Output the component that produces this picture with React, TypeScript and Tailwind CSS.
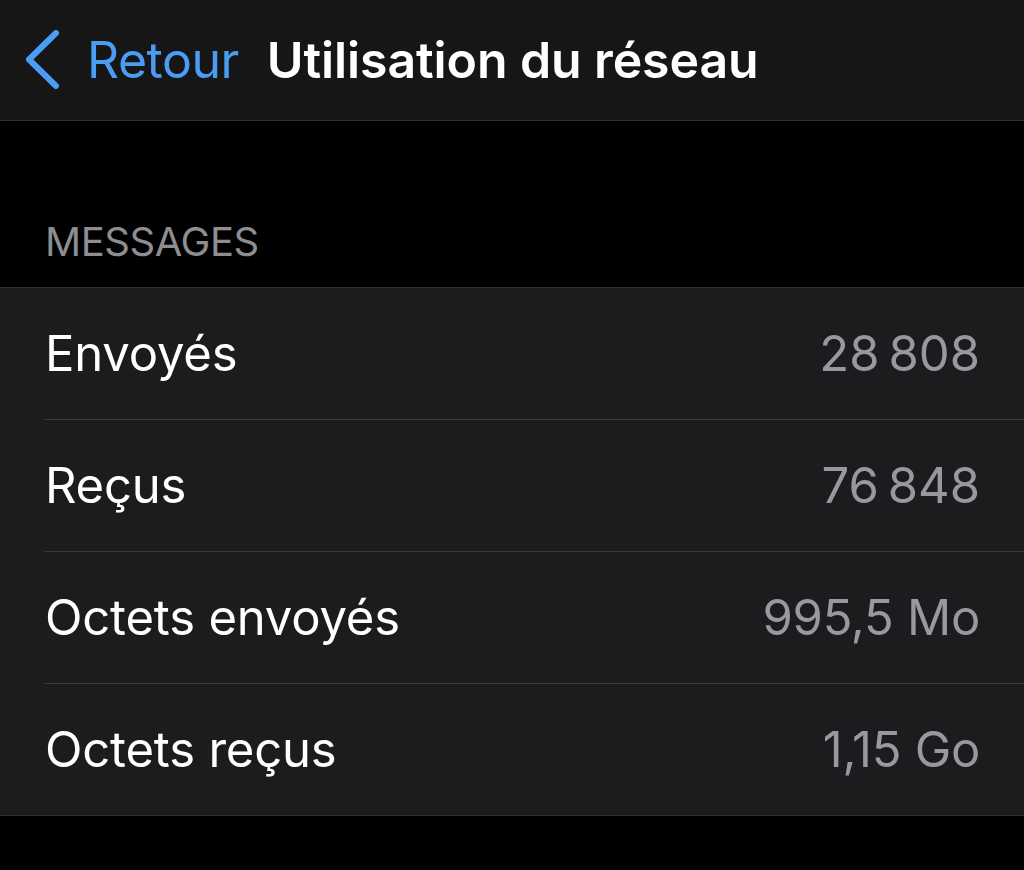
import React from "react";

const rows = [
  { label: "Envoyés", value: "28\u202f808" },
  { label: "Reçus", value: "76\u202f848" },
  { label: "Octets envoyés", value: "995,5 Mo" },
  { label: "Octets reçus", value: "1,15 Go" },
];

export default function App() {
  return (
    <div
      className="w-[1024px] h-[870px] bg-black overflow-hidden"
      style={{ fontFamily: "Inter, 'Noto Sans', sans-serif" }}
    >
      <div className="h-[121px] bg-[#161616] border-b border-[#2e2e2e] flex items-center">
        <div className="flex items-center pl-[25px]">
          <svg width="36" height="60" viewBox="0 0 36 60" className="shrink-0">
            <path
              d="M31 3 L4 29.5 L31 56"
              fill="none"
              stroke="#4a9cf5"
              strokeWidth="6"
              strokeLinecap="round"
              strokeLinejoin="round"
            />
          </svg>
          <span className="ml-[26px] text-[50px] leading-none text-[#4a9cf5] tracking-[-0.5px]">
            Retour
          </span>
          <span className="ml-[28px] text-[50px] leading-none font-semibold text-white tracking-[-0.1px]">
            Utilisation du réseau
          </span>
        </div>
      </div>
      <div className="h-[166px] flex items-end pl-[45px] pb-[25px]">
        <span className="text-[40px] leading-none text-[#8d8d92] tracking-[-0.45px]">
          MESSAGES
        </span>
      </div>
      <div className="bg-[#1c1c1e] border-t border-b border-[#2f2f31]">
        {rows.map((r, i) => (
          <div key={r.label} className="pl-[44px]">
            <div
              className={
                i < rows.length - 1
                  ? "h-[132px] flex items-center justify-between pr-[44px] border-b border-[#38383a]"
                  : "h-[131px] flex items-center justify-between pr-[44px]"
              }
            >
              <span className="pl-[1px] text-[49px] leading-none text-white tracking-[-0.2px]">
                {r.label}
              </span>
              <span className="text-[49px] leading-none text-[#98989d] tracking-[-0.3px]">
                {r.value}
              </span>
            </div>
          </div>
        ))}
      </div>
    </div>
  );
}
